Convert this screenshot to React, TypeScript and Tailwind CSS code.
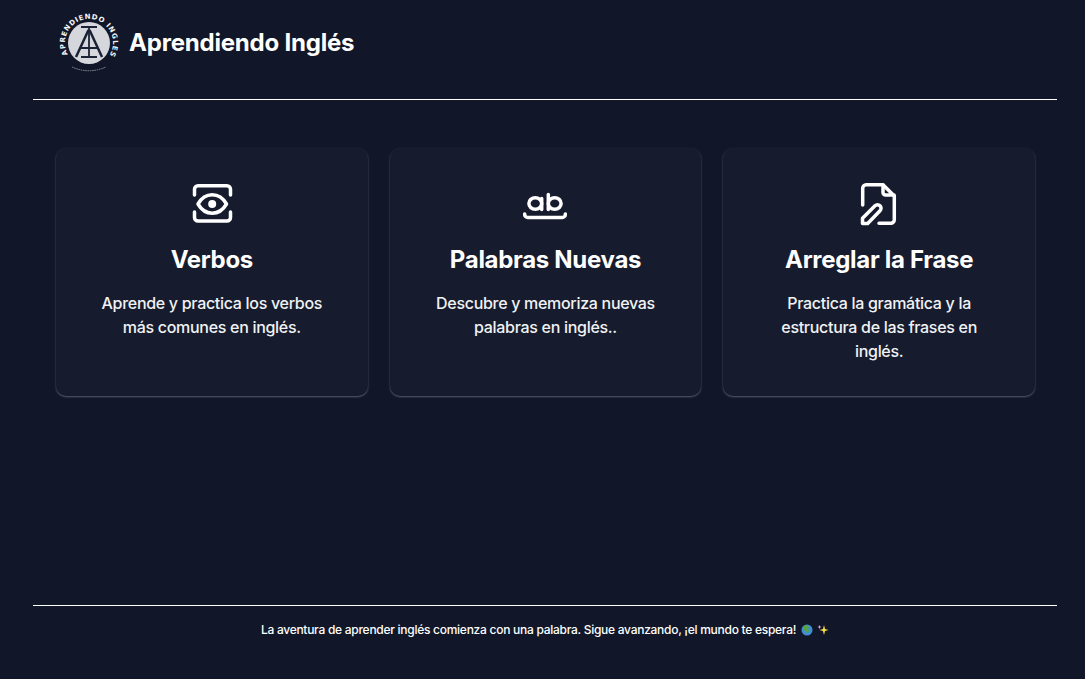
const font = "font-['Inter','Liberation_Sans',sans-serif]";

function Logo() {
  return (
    <svg width="66" height="66" viewBox="0 0 66 66" className="shrink-0">
      <defs>
        <path id="logo-arc" d="M11.900 44.300A24 24 0 1 1 54.100 44.300" />
      </defs>
      <circle cx="33" cy="33" r="21" fill="#d5d7dc" />
      <text fill="#f3f4f6" fontSize="7" fontWeight="700" fontFamily="'DejaVu Sans', sans-serif">
        <textPath href="#logo-arc" textLength="100" lengthAdjust="spacing">APRENDIENDO INGLES</textPath>
      </text>
      <g stroke="#1b2236" fill="none">
        <path d="M25 17h16M25 47h16" strokeWidth="2.200" />
        <path d="M33 17v30" strokeWidth="1.800" />
        <path d="M32.500 20L20 47M33.500 20L46 47" strokeWidth="2.500" />
        <path d="M24.500 38h17" strokeWidth="2" />
      </g>
      <path d="M16 57q17 7.500 34 0" stroke="#8b8f9a" strokeWidth="1" strokeDasharray="1.500 0.800" fill="none" />
    </svg>
  );
}

function EyeIcon() {
  return (
    <svg width="44" height="44" viewBox="0 0 44 44" fill="none" stroke="white" strokeWidth="3.500" strokeLinecap="round" strokeLinejoin="round">
      <path d="M4.500 13V7.300a3.500 3.500 0 0 1 3.500-3.500h29a3.500 3.500 0 0 1 3.500 3.500V13" />
      <path d="M4.500 30v5.500A3.500 3.500 0 0 0 8 39h29a3.500 3.500 0 0 0 3.500-3.500V30" />
      <path d="M8 22c3.500-6 8.500-9.200 14.200-9.200S33 16 36.500 22c-3.500 6-8.600 9.200-14.300 9.200S11.500 28 8 22z" />
      <circle cx="22.200" cy="22" r="4" fill="white" stroke="none" />
    </svg>
  );
}

function AbIcon() {
  return (
    <svg width="44" height="44" viewBox="0 0 44 44" fill="none" stroke="white" strokeWidth="3.500" strokeLinecap="round" strokeLinejoin="round">
      <ellipse cx="12.300" cy="21.500" rx="6.400" ry="5.800" />
      <path d="M18.700 16.500V27.500" />
      <ellipse cx="31.700" cy="21.500" rx="6.400" ry="5.800" />
      <path d="M25.300 12.500V27.500" />
      <path d="M1.700 32v.500a3 3 0 0 0 3 3h34.600a3 3 0 0 0 3-3V32" />
    </svg>
  );
}

function FileIcon() {
  return (
    <svg width="44" height="44" viewBox="0 0 44 44" fill="none" stroke="white" strokeWidth="3.500" strokeLinecap="round" strokeLinejoin="round">
      <path d="M5.700 23V6.200a3.500 3.500 0 0 1 3.500-3.500H26L37.300 14v23.800a3.500 3.500 0 0 1-3.500 3.500H22" />
      <path d="M26 3v7.500a2.500 2.500 0 0 0 2.500 2.500H37" />
      <path d="M5.500 41.500v-5.200L18 23.800a3.500 3.500 0 0 1 5 5L10.700 41.500z" />
    </svg>
  );
}

function Card({ icon, title, text }: { icon: React.ReactNode; title: string; text: string }) {
  return (
    <div className="flex h-[248px] flex-col items-center rounded-[10px] bg-[#161c2e] px-10 pt-[34px] text-center shadow-[0_1px_2px_rgba(255,255,255,0.3)]">
      {icon}
      <h2 className="mt-[18px] text-2xl leading-8 font-bold tracking-[-0.3px] text-white">{title}</h2>
      <p className="mt-[15px] text-base leading-6 font-medium tracking-[-0.3px] text-[#f1f2f4]">{text}</p>
    </div>
  );
}

export default function App() {
  return (
    <div className={`flex h-[679px] flex-col bg-[#111728] pr-[28px] pl-[33px] text-white ${font}`}>
      <header className="flex h-[100px] shrink-0 items-start border-b border-white pt-[10px] pl-[23px]">
        <Logo />
        <h1 className="mt-[17px] ml-[7px] text-2xl leading-8 font-bold tracking-[-0.2px]">Aprendiendo Inglés</h1>
      </header>
      <main className="grid flex-1 grid-cols-3 content-start gap-[22px] pt-[48px] pr-[22px] pl-[23px]">
        <Card icon={<EyeIcon />} title="Verbos" text="Aprende y practica los verbos más comunes en inglés." />
        <Card icon={<AbIcon />} title="Palabras Nuevas" text="Descubre y memoriza nuevas palabras en inglés.." />
        <Card icon={<FileIcon />} title="Arreglar la Frase" text="Practica la gramática y la estructura de las frases en inglés." />
      </main>
      <footer className="flex h-[74px] shrink-0 items-start justify-center border-t border-white pt-[16px] text-xs leading-4 font-medium tracking-[-0.27px]">
        <span>La aventura de aprender inglés comienza con una palabra. Sigue avanzando, ¡el mundo te espera!</span>
        <svg width="12" height="12" viewBox="0 0 12 12" className="mt-[2px] ml-[5px]">
          <circle cx="6" cy="6" r="5.500" fill="#3f8fd6" />
          <path d="M3 2l3-1 2 2-1 2 1 2-2 3-1-3-3-1z" fill="#5aa33c" />
        </svg>
        <svg width="12" height="12" viewBox="0 0 12 12" className="mt-[2px] ml-[4px]">
          <path d="M7 1l1 4 3.500 1-3.500 1-1 4-1-4-3.500-1 3.500-1z" fill="#fde047" />
          <path d="M2.500 1l.6 1.400L4.500 3l-1.400.6L2.500 5l-.6-1.400L.5 3l1.400-.6z" fill="#f9a8d4" />
        </svg>
      </footer>
    </div>
  );
}
